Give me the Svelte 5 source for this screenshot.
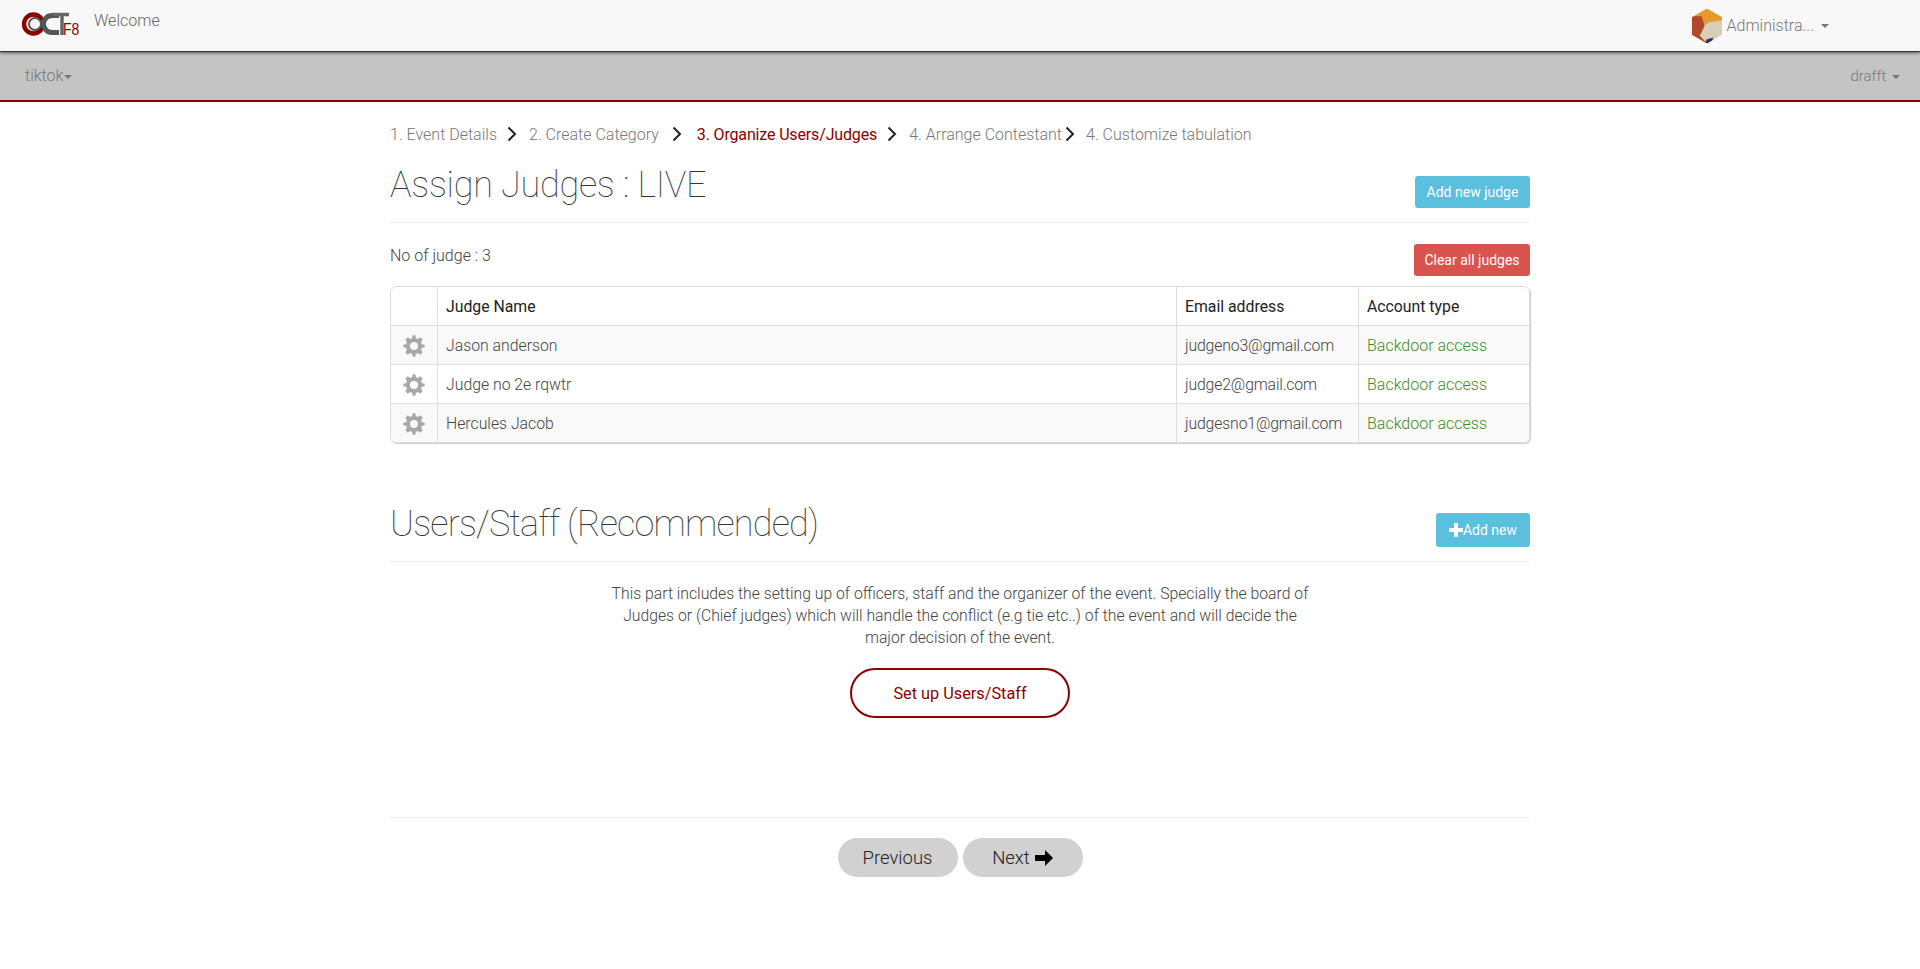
<script>
  const steps = [
    { label: "1. Event Details" },
    { label: "2. Create Category", wide: true },
    { label: "3. Organize Users/Judges", active: true },
    { label: "4. Arrange Contestant", tight: true },
    { label: "4. Customize tabulation" }
  ];

  const judges = [
    { name: "Jason anderson", email: "judgeno3@gmail.com" },
    { name: "Judge no 2e rqwtr", email: "judge2@gmail.com" },
    { name: "Hercules Jacob", email: "judgesno1@gmail.com" }
  ];

  const gear =
    "M10 1h-2l-.4 2.1a6 6 0 0 0-1.5.6L4.3 2.5 2.5 4.3l1.2 1.8a6 6 0 0 0-.6 1.5L1 8v2l2.1.4c.1.5.3 1 .6 1.5l-1.2 1.8 1.8 1.8 1.8-1.2c.5.3 1 .5 1.5.6L8 17h2l.4-2.1c.5-.1 1-.3 1.5-.6l1.8 1.2 1.8-1.8-1.2-1.8c.3-.5.5-1 .6-1.5L17 10V8l-2.1-.4a6 6 0 0 0-.6-1.5l1.2-1.8-1.8-1.8-1.8 1.2a6 6 0 0 0-1.5-.6zM9 6a3 3 0 1 1 0 6 3 3 0 0 1 0-6z";
</script>

<style>
  :global(body) {
    font-family: Roboto, "Liberation Sans", Arial, sans-serif;
    font-weight: 300;
    font-size: 15px;
    color: #444;
    background: #fff;
  }

  .topbar {
    height: 51px;
    background: #f8f8f8;
    display: flex;
    align-items: center;
    justify-content: space-between;
    box-shadow: 0 1px 0 #333, 0 2px 3px #555;
    position: relative;
    padding-left: 22px;
  }

  .brand {
    display: flex;
    align-items: flex-start;
    gap: 15px;
    margin-bottom: 3px;
  }

  .welcome {
    font-size: 16px;
    color: #666;
  }

  .user {
    display: flex;
    align-items: center;
    margin-right: 91px;
    color: #777;
    font-size: 16px;
  }

  .user svg {
    margin-right: 5px;
  }

  .caret {
    display: inline-block;
    width: 0;
    height: 0;
    border-top: 4px solid #777;
    border-left: 4px solid transparent;
    border-right: 4px solid transparent;
    margin-left: 7px;
    vertical-align: middle;
  }

  .subbar {
    height: 49px;
    background: #c4c4c4;
    border-bottom: 2px solid #8b0000;
    display: flex;
    align-items: center;
    justify-content: space-between;
    padding: 0 20px 0 25px;
    color: #777;
    font-size: 16px;
  }

  .subbar .left .caret {
    margin-left: 1px;
  }

  .subbar .right {
    font-size: 15px;
  }

  .subbar .right .caret {
    margin-left: 2px;
  }

  .container {
    width: 1140px;
    margin: 0 auto;
  }

  .steps {
    display: flex;
    align-items: center;
    height: 20px;
    margin-top: 22px;
    font-size: 16px;
    color: #777;
  }

  .steps .active {
    color: #8b0000;
    font-weight: 400;
    letter-spacing: -0.15px;
  }

  .chev {
    margin: 0 12px 0 10px;
  }

  .chev.wide {
    margin: 0 15px 0 13px;
  }

  .chev.tight {
    margin: 0 11px 0 3px;
  }

  .heading {
    display: flex;
    justify-content: space-between;
    align-items: flex-end;
    border-bottom: 1px solid #eee;
  }

  h1 {
    margin: 0;
    font-size: 36px;
    font-weight: 100;
    line-height: 40px;
    color: #333;
  }

  .first {
    height: 78px;
  }

  .first h1 {
    margin-bottom: 17px;
    letter-spacing: -0.25px;
  }

  .first .btn {
    margin-bottom: 14px;
  }

  .btn {
    color: #fff;
    border-radius: 3px;
    font-size: 14px;
    font-weight: 400;
    display: flex;
    align-items: center;
    justify-content: center;
    height: 32px;
  }

  .info {
    background: #5bc0de;
    width: 115px;
  }

  .danger {
    background: #d9534f;
    width: 116px;
  }

  .count {
    display: flex;
    justify-content: space-between;
    align-items: flex-start;
    margin-top: 21px;
    font-size: 16px;
  }

  .count span {
    margin-top: 2px;
  }

  table {
    width: 100%;
    margin-top: 10px;
    border-collapse: separate;
    border-spacing: 0;
    border: 1px solid #ddd;
    border-radius: 6px;
    box-shadow: 1px 1px 1px #ccc;
    table-layout: fixed;
    font-size: 15.8px;
  }

  th,
  td {
    height: 38px;
    padding: 0 8px;
    text-align: left;
    font-weight: 300;
    border-left: 1px solid #ddd;
    border-top: 1px solid #ddd;
  }

  th {
    color: #222;
    font-weight: 400;
    border-top: 0;
  }

  th:first-child,
  td:first-child {
    border-left: 0;
    text-align: center;
    padding: 0;
  }

  td svg {
    display: block;
    margin: 1px auto 0;
  }

  tbody tr:nth-child(odd) td {
    background: #f9f9f9;
  }

  tbody tr:last-child td:first-child {
    border-bottom-left-radius: 6px;
  }

  tbody tr:last-child td:last-child {
    border-bottom-right-radius: 6px;
  }

  .email {
    letter-spacing: -0.15px;
  }

  .access {
    color: #3c8c1e;
    font-size: 16px;
  }

  .second {
    margin-top: 56px;
    height: 62px;
  }

  .second h1 {
    margin-bottom: 17px;
    letter-spacing: -0.8px;
  }

  .second .btn {
    width: 94px;
    height: 34px;
    margin-bottom: 14px;
  }

  .note {
    width: 700px;
    margin: 21px auto 0;
    text-align: center;
    line-height: 22px;
    font-size: 15.75px;
  }

  .setup {
    width: 220px;
    height: 50px;
    box-sizing: border-box;
    margin: 19px auto 0;
    border: 2px solid #8b0000;
    border-radius: 25px;
    color: #8b0000;
    font-size: 16.3px;
    font-weight: 400;
    display: flex;
    align-items: center;
    justify-content: center;
  }

  .pager {
    margin-top: 99px;
    border-top: 1px solid #eee;
    padding-top: 20px;
    display: flex;
    justify-content: center;
    gap: 5px;
  }

  .pill {
    width: 120px;
    height: 39px;
    border-radius: 20px;
    background: #d1d1d1;
    color: #222;
    font-size: 18.5px;
    display: flex;
    align-items: center;
    justify-content: center;
    gap: 5px;
  }
</style>

<header class="topbar">
  <div class="brand">
    <svg width="57" height="26" viewBox="0 0 57 26">
      <circle cx="11.500" cy="13" r="9.500" fill="none" stroke="#8b0000" stroke-width="4.500" />
      <circle cx="13" cy="13" r="6" fill="none" stroke="#555" stroke-width="2" />
      <path d="M37 4.500h-7a8.500 8.500 0 0 0 0 17h7" fill="none" stroke="#555" stroke-width="5" />
      <path d="M31 3.500h16M40 3.500V24" fill="none" stroke="#666" stroke-width="3.500" />
      <text transform="translate(41 24) scale(1 1.200)" font-size="14" font-family="Liberation Sans" fill="#8b0000">F8</text>
    </svg>
    <span class="welcome">Welcome</span>
  </div>
  <div class="user">
    <svg width="30" height="36" viewBox="0 0 31 36">
      <clipPath id="hex">
        <polygon points="15.500,0 31,9 31,27 15.500,36 0,27 0,9" />
      </clipPath>
      <g clip-path="url(#hex)">
        <rect width="31" height="36" fill="#d8cdb6" />
        <polygon points="0,0 31,0 31,12 17,14 12,18 0,18" fill="#e79a2b" />
        <polygon points="0,8 10,8 13,18 8,28 16,36 0,36" fill="#b3472a" />
        <polygon points="15,32 22,30 20,36 14,36" fill="#2b3552" />
      </g>
    </svg>
    <span>Administra...</span><i class="caret"></i>
  </div>
</header>

<nav class="subbar">
  <div class="left">tiktok<i class="caret"></i></div>
  <div class="right">drafft <i class="caret"></i></div>
</nav>

<main class="container">
  <div class="steps">
    {#each steps as step, i}
      <span class:active={step.active}>{step.label}</span>
      {#if i < steps.length - 1}
        <svg class="chev" class:tight={step.tight} class:wide={step.wide} width="10" height="16" viewBox="0 0 10 16">
          <path d="M1.500 1.500l6.500 6.500-6.500 6.500" fill="none" stroke="#222" stroke-width="2" />
        </svg>
      {/if}
    {/each}
  </div>

  <div class="heading first">
    <h1>Assign Judges : LIVE</h1>
    <div class="btn info">Add new judge</div>
  </div>

  <div class="count">
    <span>No of judge : 3</span>
    <div class="btn danger">Clear all judges</div>
  </div>

  <table>
    <colgroup>
      <col style="width:46px" />
      <col />
      <col style="width:182px" />
      <col style="width:171px" />
    </colgroup>
    <thead>
      <tr>
        <th></th>
        <th>Judge Name</th>
        <th>Email address</th>
        <th>Account type</th>
      </tr>
    </thead>
    <tbody>
      {#each judges as judge}
        <tr>
          <td>
            <svg width="24" height="24" viewBox="0 0 18 18">
              <path d={gear} fill="#a8a8a8" fill-rule="evenodd" />
            </svg>
          </td>
          <td>{judge.name}</td>
          <td class="email">{judge.email}</td>
          <td class="access">Backdoor access</td>
        </tr>
      {/each}
    </tbody>
  </table>

  <div class="heading second">
    <h1>Users/Staff (Recommended)</h1>
    <div class="btn info">
      <svg width="14" height="14" viewBox="0 0 14 14">
        <path d="M5 0h4v5h5v4H9v5H5V9H0V5h5z" fill="#fff" />
      </svg>
      Add new
    </div>
  </div>

  <p class="note">
    This part includes the setting up of officers, staff and the organizer of the event. Specially the board of
    Judges or (Chief judges) which will handle the conflict (e.g tie etc..) of the event and will decide the
    major decision of the event.
  </p>

  <div class="setup">Set up Users/Staff</div>

  <div class="pager">
    <div class="pill">Previous</div>
    <div class="pill">
      Next
      <svg width="18" height="16" viewBox="0 0 18 16">
        <path d="M10 0l8 8-8 8v-5H0V5h10z" fill="#000" />
      </svg>
    </div>
  </div>
</main>
